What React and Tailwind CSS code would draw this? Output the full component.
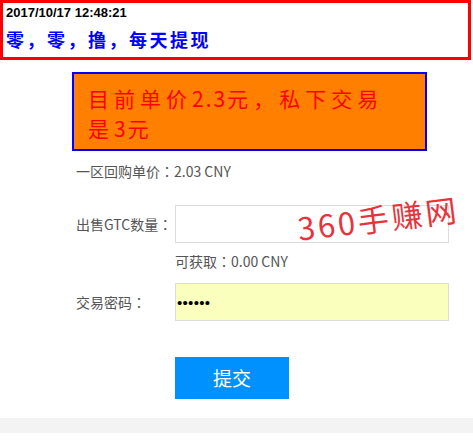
import React from 'react';

const cjk = '"Noto Sans CJK SC", "Noto Sans", sans-serif';

// full-width colon centred in its box, as in the reference
const Colon = () => <span className="font-['Noto_Sans_CJK_TC',sans-serif]">：</span>;

const App = () => {
  return (
    <div className="relative w-[473px] h-[448px] bg-white overflow-hidden" style={{ fontFamily: cjk }}>
      {/* Top notice */}
      <div className="w-[471px] h-[60px] border-[3px] border-[#ff0000] pt-[2px] pl-[3px]">
        <div className="text-[13px] leading-[15px] font-bold text-black font-['Liberation_Sans',sans-serif]">
          2017/10/17 12:48:21
        </div>
        <div className="mt-[7px] text-[18px] leading-[24px] font-bold tracking-[2.5px] text-[#0000ff]">
          零，零，撸，每天提现
        </div>
      </div>

      {/* Price banner */}
      <div className="mt-[12px] ml-[72px] w-[355px] border-2 border-[#0000ff] bg-[#ff8000] pt-[9px] pb-[6px] pl-[14px] pr-[4px] text-[21px] leading-[30px] tracking-[5px] text-[#ff0000]">
        目前单价<span className="tracking-[2px]">2.3</span>元，私下交易<br />是<span className="tracking-[2px]">3</span>元
      </div>

      {/* Form */}
      <div className="mt-[10px] pl-[76px] text-[14px] leading-[20px] text-[#555]">
        一区回购单价<Colon />2.03 CNY
      </div>

      <div className="mt-[24px] flex items-center">
        <div className="w-[175px] pl-[76px] text-[14px] text-[#555]">出售GTC数量<Colon /></div>
        <div className="w-[274px] h-[38px] border border-[#dcdcdc] bg-white"></div>
      </div>
      <div className="mt-[8px] pl-[175px] text-[14px] leading-[20px] text-[#555]">
        可获取<Colon />0.00 CNY
      </div>

      <div className="mt-[12px] flex items-center">
        <div className="w-[175px] pl-[76px] text-[14px] text-[#555]">交易密码<Colon /></div>
        <div className="w-[274px] h-[38px] border border-[#dcdcdc] bg-[#faffbd] flex items-center pl-[1px]">
          <span className="text-[15px] leading-none tracking-[0.3px] text-black font-['Liberation_Sans',sans-serif]">••••••</span>
        </div>
      </div>

      <div className="mt-[36px] ml-[175px] w-[114px] h-[42px] bg-[#0091ff] flex items-center justify-center text-white text-[19px]">
        提交
      </div>

      <div className="mt-[19px] h-[15px] bg-[#f3f3f3]"></div>

      {/* Watermark */}
      <div className="absolute left-[297px] top-[198px] -rotate-[7deg] text-[31px] leading-[40px] tracking-[3px] text-[#e8333a] pointer-events-none">
        360手赚网
      </div>
    </div>
  );
};

export default App;
